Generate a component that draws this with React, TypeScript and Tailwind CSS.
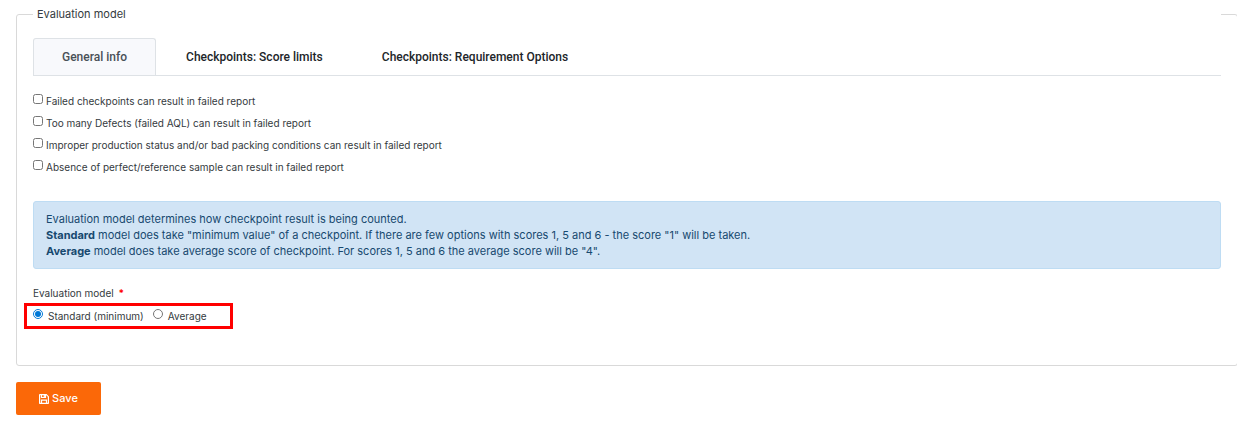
import { useState } from "react";

const tabs = [
  "General info",
  "Checkpoints: Score limits",
  "Checkpoints: Requirement Options",
];

const failRules = [
  { id: "checkpoints", label: "Failed checkpoints can result in failed report" },
  { id: "defects", label: "Too many Defects (failed AQL) can result in failed report" },
  {
    id: "production",
    label: "Improper production status and/or bad packing conditions can result in failed report",
  },
  { id: "sample", label: "Absence of perfect/reference sample can result in failed report" },
];

const models = [
  { id: "standard", label: "Standard (minimum)" },
  { id: "average", label: "Average" },
];

const SaveIcon = () => (
  <svg
    viewBox="0 0 10 10"
    className="size-[10px]"
    fill="none"
    stroke="currentColor"
    strokeWidth="1.2"
    aria-hidden="true"
  >
    <path d="M1 .6H7.3L9.4 2.7V9A.4.4 0 0 1 9 9.4H1A.4.4 0 0 1 .6 9V1A.4.4 0 0 1 1 .6Z" />
    <path d="M2.5 .5V3.5H6.5V.5M2.5 9.5V6.2H7.5V9.5" />
    <path d="M5.3 .6V3.2" />
  </svg>
);

export default function App() {
  const [activeTab, setActiveTab] = useState(tabs[0]);
  const [model, setModel] = useState("standard");

  return (
    <form
      className="overflow-x-hidden bg-white pt-[6px] pl-4 font-['Inter',sans-serif] text-[#343a40]"
      onSubmit={(e) => e.preventDefault()}
    >
      <fieldset className="-mr-px rounded-[3px] border border-[#d9d9d9] px-4 pb-9">
        <legend className="w-full px-1 text-[11px] leading-4">Evaluation model</legend>

        <div role="tablist" className="mt-4 flex gap-px border-b border-[#dee2e6]">
          {tabs.map((tab) => (
            <button
              key={tab}
              type="button"
              role="tab"
              aria-selected={tab === activeTab}
              onClick={() => setActiveTab(tab)}
              className={
                tab === activeTab
                  ? "h-[37px] rounded-t-[3px] border border-b-0 border-[#dee2e6] bg-[#f8f9fc] px-7 font-['Roboto',sans-serif] text-xs font-medium text-[#495057]"
                  : "h-[37px] border border-b-0 border-transparent px-7 font-['Roboto',sans-serif] text-xs font-medium text-[#212529]"
              }
            >
              {tab}
            </button>
          ))}
        </div>

        <div className="mt-[14px]">
          {failRules.map(({ id, label }) => (
            <div key={id} className="flex h-[22px] gap-[3px]">
              <input id={id} type="checkbox" className="mt-1 size-[10px]" />
              <label htmlFor={id} className="pt-[3px] text-[10px] leading-4">
                {label}
              </label>
            </div>
          ))}
        </div>

        <div className="mt-[23px] rounded-[3px] border border-[#bedcf3] bg-[#d1e4f5] px-3 py-[9px] text-[11px] leading-4 text-[#17496f]">
          <p>Evaluation model determines how checkpoint result is being counted.</p>
          <p>
            <strong>Standard</strong> model does take "minimum value" of a checkpoint. If there are few
            options with scores 1, 5 and 6 - the score "1" will be taken.
          </p>
          <p>
            <strong>Average</strong> model does take average score of checkpoint. For scores 1, 5 and 6
            the average score will be "4".
          </p>
        </div>

        <div role="radiogroup" aria-labelledby="model-label" className="mt-4">
          <p id="model-label" className="text-[10px] leading-4">
            Evaluation model <span className="ml-[2px] font-bold text-[#ff0000]">*</span>
          </p>
          <div className="mt-[2px] -ml-[9px] flex h-[26px] w-[209px] gap-[9px] border-3 border-[#ff0000] pl-[6px]">
            {models.map(({ id, label }) => (
              <div key={id} className="flex gap-[5px]">
                <input
                  id={id}
                  type="radio"
                  name="model"
                  checked={model === id}
                  onChange={() => setModel(id)}
                  className="mt-[3px] size-[10px] accent-[#0078d7]"
                />
                <label htmlFor={id} className="pt-[2px] text-[10px] leading-4">
                  {label}
                </label>
              </div>
            ))}
          </div>
        </div>
      </fieldset>

      <button
        type="submit"
        className="mt-4 flex h-[33px] w-[85px] items-center justify-center gap-[3px] rounded-[2px] bg-[#fb6808] text-[11px] font-medium text-white"
      >
        <SaveIcon />
        Save
      </button>
    </form>
  );
}
